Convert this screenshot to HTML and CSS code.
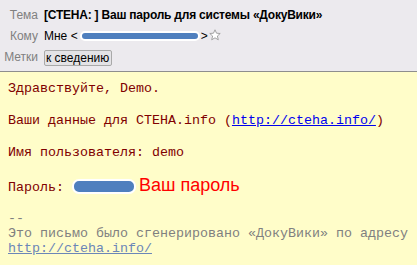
FILE: index.html
```html
<!DOCTYPE html>
<html>
<head>
<meta charset="utf-8">
<title>Ваш пароль</title>
<link rel="stylesheet" href="styles.css">
</head>
<body>

<div id="head">
    <label>Тема</label>  <div class="subject">[СТЕНА: ] Ваш пароль для системы «ДокуВики»</div>
    <label>Кому</label>  <div class="to">Мне &lt;<span class="mask mask-mail"></span>&gt;<svg class="star" width="12" height="12" viewBox="0 0 12 12"><path d="M6 0.8 L7.5 4.2 L11.2 4.5 L8.4 7 L9.3 10.8 L6 8.8 L2.7 10.8 L3.6 7 L0.8 4.5 L4.5 4.2 Z" fill="#fff" stroke="#9a9a9a" stroke-width="0.9" stroke-linejoin="round"/></svg></div>
    <label>Метки</label> <div><span class="tag">к сведению</span></div>
</div>

<div id="mail">
<p>Здравствуйте, Demo.</p>
<p>Ваши данные для СТЕНА.info (<a href="#">http://cteha.info/</a>)</p>
<p>Имя пользователя: demo</p>
<p class="pass">Пароль: <span class="mask mask-pass"></span><span class="note">Ваш пароль</span></p>
<p class="sign">--<br>Это письмо было сгенерировано «ДокуВики» по адресу<br><a href="#">http://cteha.info/</a></p>
</div>

</body>
</html>
```

FILE: styles.css
```css
html, body { margin: 0; padding: 0; background-color: #FFFDC9; }
body { font: normal 12px/1.2 'Liberation Sans', Arial, sans-serif; color: #000; }

#head { display: grid; grid-template-columns: 38px auto; grid-auto-rows: 21px; column-gap: 6px; align-items: center; padding: 5px 0 3px; background-color: #ECEAEE; border-bottom: 1px solid #8E8E8E; }
#head label { text-align: right; color: #808080; }
.subject { font-weight: bold; letter-spacing: -0.22px; }
.to { display: flex; align-items: center; }
.star { margin-left: 1px; margin-top: -3px; }
.tag { display: inline-block; padding: 0 2px 0 1px; line-height: 14px; background-color: #E4E3E6; border: 1px solid #A9A9A9; border-radius: 2px; }

.mask { display: inline-block; background-color: #4F7FBE; border: 2px solid #FFF; border-radius: 7px; }
.mask-mail { width: 116px; height: 6px; margin: 0 1px 0 2px; }
.mask-pass { width: 60px; height: 11px; margin: 0 3px 0 0; vertical-align: -3px; }

#mail { padding: 9px 8px 8px; font: normal 13.33px/16px 'Liberation Mono', 'Courier New', monospace; color: #800000; }
#mail p { margin: 0 0 16px; white-space: nowrap; }
#mail a { color: #0000EE; }
#mail .pass { height: 17px; margin-bottom: 17px; }
.note { font: normal 18px/16px 'Liberation Sans', Arial, sans-serif; color: #FF0000; }
#mail .sign { margin: 0; line-height: 15px; color: #808080; }
#mail .sign a { color: #6B86B8; }
```
